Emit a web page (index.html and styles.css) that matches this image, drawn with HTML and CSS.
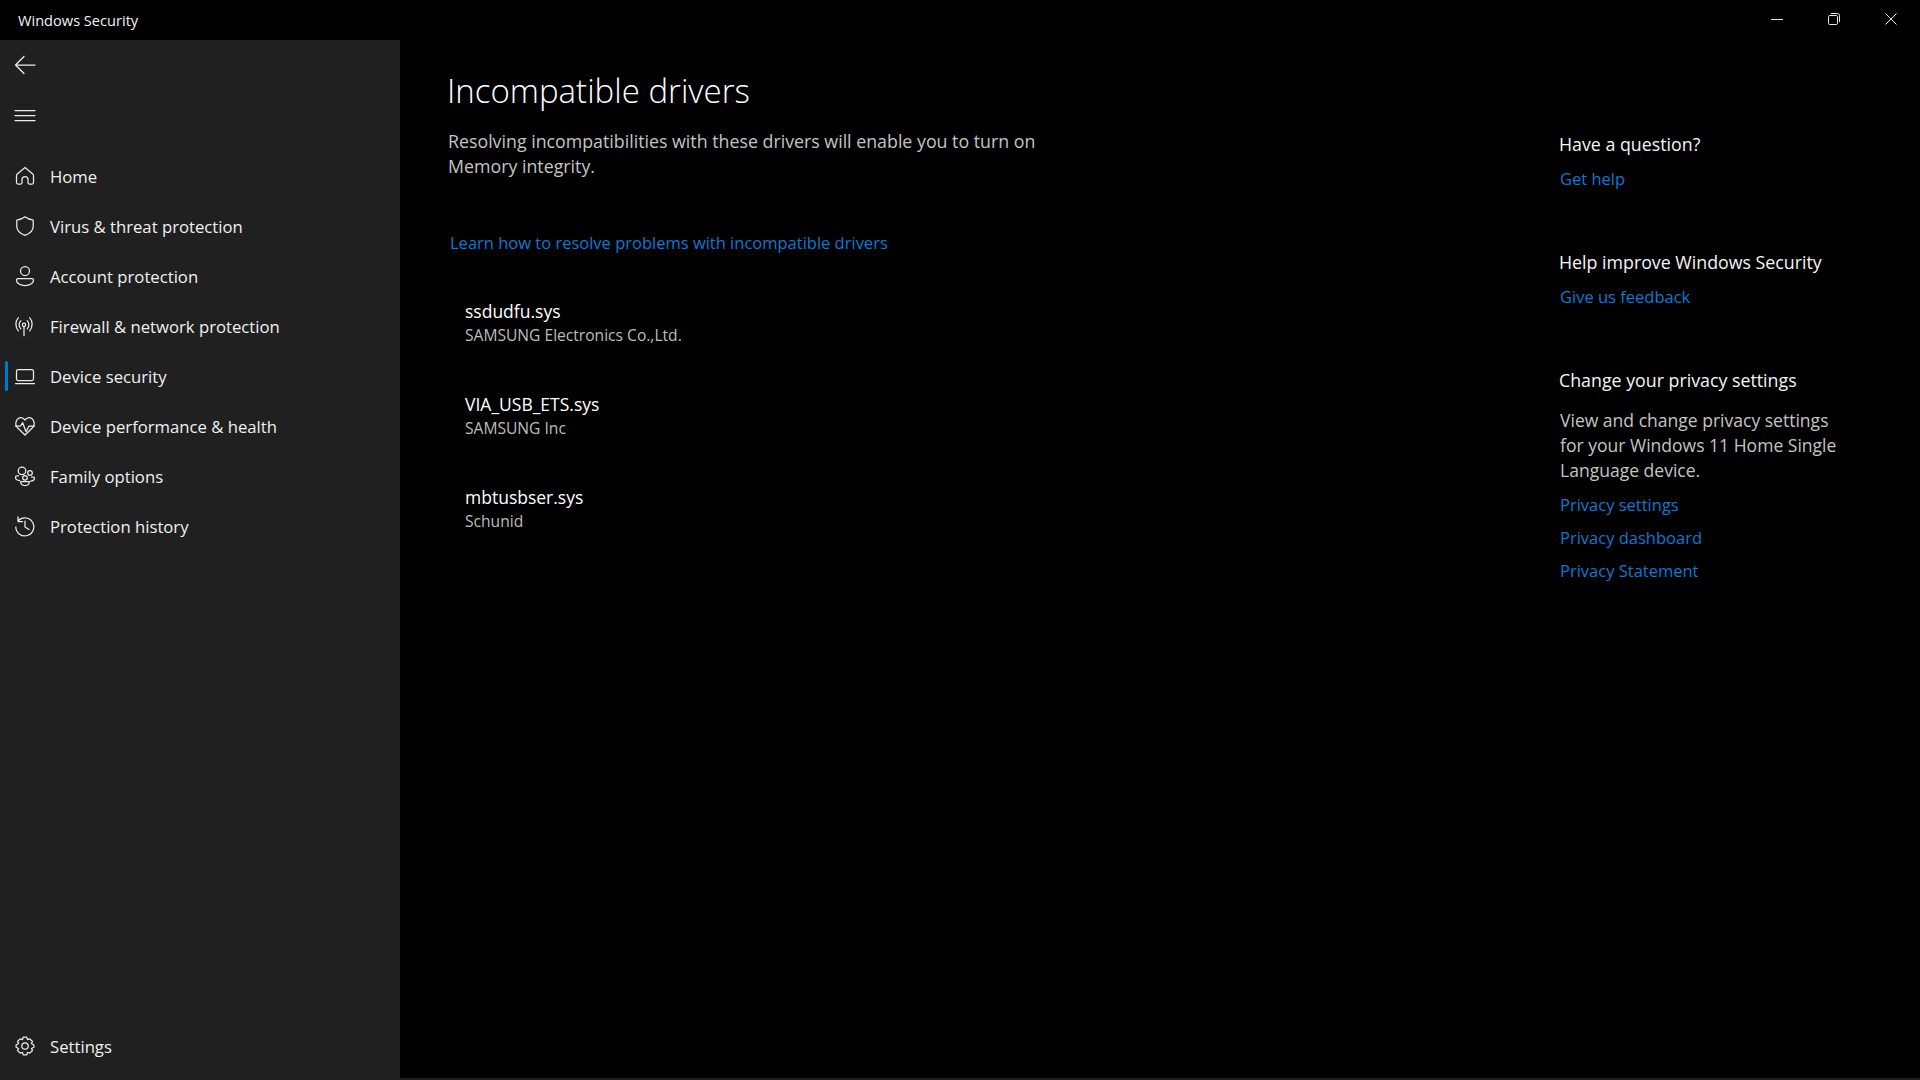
FILE: index.html
```html
<!DOCTYPE html>
<html lang="en">
<head>
<meta charset="utf-8">
<title>Windows Security</title>
<link rel="stylesheet" href="styles.css">
</head>
<body>
<div class="app">
  <header class="titlebar">
    <span class="app-name">Windows Security</span>
    <div class="controls">
      <span class="ctl"><svg width="14" height="14" viewBox="0 0 14 14"><path d="M1 7.5H13"/></svg></span>
      <span class="ctl"><svg width="14" height="14" viewBox="0 0 14 14"><rect x="1.5" y="3.5" width="9" height="9" rx="1.2"/><path d="M4 1.5H10.5A2 2 0 0 1 12.5 3.5V10"/></svg></span>
      <span class="ctl"><svg width="14" height="14" viewBox="0 0 14 14"><path d="M1.5 1.5L12.5 12.5M12.5 1.5L1.5 12.5"/></svg></span>
    </div>
  </header>
  <div class="main">
    <aside class="sidebar">
      <div class="tool"><svg class="icon" viewBox="0 0 20 20"><path d="M.5 10H20M9 1.5L.5 10L9 18.5"/></svg></div>
      <div class="tool"><svg class="icon" viewBox="0 0 20 20"><path d="M0 5.5H20M0 10.5H20M0 15.5H20"/></svg></div>
      <nav class="nav">
        <a class="nav-item"><svg class="icon" viewBox="0 0 20 20"><path d="M10 1.5L2 8.3A2 2 0 0 0 1.5 9.5V16.5A1.5 1.5 0 0 0 3 18H6A1.2 1.2 0 0 0 7 17V13.5A3 3 0 0 1 13 13.5V17A1.2 1.2 0 0 0 14 18H17A1.5 1.5 0 0 0 18.5 16.5V9.5A2 2 0 0 0 18 8.3Z"/></svg><span>Home</span></a>
        <a class="nav-item"><svg class="icon" viewBox="0 0 20 20"><path d="M10 .8C7.5 2.8 5 3.8 1.8 4V10.5C1.8 14.5 4.5 17.3 10 19.3C15.5 17.3 18.2 14.5 18.2 10.5V4C15 3.8 12.5 2.8 10 .8Z"/></svg><span>Virus &amp; threat protection</span></a>
        <a class="nav-item"><svg class="icon" viewBox="0 0 20 20"><circle cx="10" cy="5" r="4.5"/><path d="M3 12.5H17A1.5 1.5 0 0 1 18.5 14C18.5 17.5 14.5 19.5 10 19.5C5.5 19.5 1.5 17.5 1.5 14A1.5 1.5 0 0 1 3 12.5Z"/></svg><span>Account protection</span></a>
        <a class="nav-item"><svg class="icon" viewBox="0 0 20 20"><circle cx="9" cy="8.8" r="1.7"/><path d="M9 10.5V19.5M5.8 4.8A5.5 5.5 0 0 0 5.8 12.8M12.2 4.8A5.5 5.5 0 0 1 12.2 12.8M3.4 1.6A10 10 0 0 0 3.4 14.8M14.6 1.6A10 10 0 0 1 14.6 14.8"/></svg><span>Firewall &amp; network protection</span></a>
        <a class="nav-item active"><svg class="icon" viewBox="0 0 20 20"><rect x="1.5" y="3.5" width="17" height="11" rx="1.8"/><path d="M.5 17.5H19.5"/></svg><span>Device security</span></a>
        <a class="nav-item"><svg class="icon" viewBox="0 0 20 20"><path d="M10 19L2.8 12C-1.5 7.5 2 1.7 6 1.7C7.800 1.7 9 2.7 10 4C11 2.7 12.2 1.7 14 1.7C18 1.7 21.5 7.5 17.2 12Z"/><path d="M.5 10H5.5L7.7 6.700L11 15.700L14 10H19.5"/></svg><span>Device performance &amp; health</span></a>
        <a class="nav-item"><svg class="icon" viewBox="0 0 20 20"><circle cx="7" cy="4.800" r="3.800"/><circle cx="15" cy="7" r="2.300"/><circle cx="10" cy="11.800" r="2.300"/><path d="M3.500 9.800H2A1.500 1.500 0 0 0 .5 11.300C.5 13.300 2.300 14.500 4.800 14.500M16.500 11H18.500A1 1 0 0 1 19.500 12C19.500 13.800 17.800 15 15.500 15"/><path d="M5.700 15.500H14.300V16C14.300 18 12.500 19.500 10 19.500C7.500 19.500 5.700 18 5.700 16Z"/></svg><span>Family options</span></a>
        <a class="nav-item"><svg class="icon" viewBox="0 0 20 20"><path d="M3 5A9 9 0 1 1 .8 11M3 .8V5.500H7.500M10 5V11L14 13.500"/></svg><span>Protection history</span></a>
      </nav>
      <a class="nav-item settings"><svg class="icon" viewBox="0 0 20 20"><circle cx="10" cy="10" r="3.200"/><path d="M8.200 1.200H11.800L12.500 3.600L14.800 2.900L17.500 5.500L16.400 7.500L18.900 9V11.200L16.500 12.500L17.500 14.500L14.800 17.100L12.500 16.400L11.800 18.800H8.200L7.500 16.400L5.200 17.100L2.500 14.500L3.500 12.500L1.100 11.200V9L3.600 7.500L2.500 5.500L5.200 2.900L7.500 3.600Z"/></svg><span>Settings</span></a>
    </aside>
    <main class="content">
      <section class="primary">
        <h1 class="page-title">Incompatible drivers</h1>
        <p class="lead">Resolving incompatibilities with these drivers will enable you to turn on<br>Memory integrity.</p>
        <a class="link learn">Learn how to resolve problems with incompatible drivers</a>
        <ul class="drivers">
          <li class="driver"><div class="driver-name">ssdudfu.sys</div><div class="driver-vendor">SAMSUNG Electronics Co.,Ltd.</div></li>
          <li class="driver"><div class="driver-name">VIA_USB_ETS.sys</div><div class="driver-vendor">SAMSUNG Inc</div></li>
          <li class="driver"><div class="driver-name">mbtusbser.sys</div><div class="driver-vendor">Schunid</div></li>
        </ul>
      </section>
      <section class="aside-col">
        <div class="block">
          <h2 class="block-title">Have a question?</h2>
          <a class="link">Get help</a>
        </div>
        <div class="block">
          <h2 class="block-title">Help improve Windows Security</h2>
          <a class="link">Give us feedback</a>
        </div>
        <div class="block">
          <h2 class="block-title">Change your privacy settings</h2>
          <p class="block-text">View and change privacy settings<br>for your Windows 11 Home Single<br>Language device.</p>
          <a class="link">Privacy settings</a>
          <a class="link">Privacy dashboard</a>
          <a class="link">Privacy Statement</a>
        </div>
      </section>
    </main>
  </div>
  <div class="bottom-edge"></div>
</div>
</body>
</html>
```
FILE: styles.css
```css
* { box-sizing: border-box; }
html, body { margin: 0; height: 100%; background: #000; }
body {
  font-family: "Open Sans", "Noto Sans", "Liberation Sans", sans-serif;
  font-size: 16.7px;
  color: #f2f2f2;
  overflow: hidden;
}
.app { display: flex; flex-direction: column; height: 1080px; }
.titlebar {
  height: 40px;
  flex: none;
  display: flex;
  align-items: center;
  justify-content: space-between;
  background: #000;
}
.app-name { padding-left: 18px; font-size: 14.6px; color: #f2f2f2; }
.controls { display: flex; height: 40px; padding-right: 1px; margin-top: -2px; }
.ctl { width: 57px; display: flex; align-items: center; justify-content: center; }
.ctl svg { fill: none; stroke: #e6e6e6; stroke-width: 1; }
.main { flex: 1; display: flex; min-height: 0; }
.sidebar {
  width: 400px;
  flex: none;
  background: #202020;
  display: flex;
  flex-direction: column;
  padding-bottom: 7px;
}
.icon {
  width: 20px;
  height: 20px;
  flex: none;
  overflow: visible;
  fill: none;
  stroke: #ececec;
  stroke-width: 1.25;
  stroke-linejoin: round;
  stroke-linecap: round;
}
.tool { height: 50px; display: flex; align-items: center; padding-left: 15px; }
.nav { margin-top: 11px; display: flex; flex-direction: column; flex: 1; }
.nav-item {
  position: relative;
  height: 50px;
  flex: none;
  display: flex;
  align-items: center;
  gap: 15px;
  padding-left: 15px;
  color: #f0f0f0;
}
.nav-item.active::before {
  content: "";
  position: absolute;
  left: 5px;
  top: 10px;
  width: 3px;
  height: 30px;
  border-radius: 2px;
  background: #0078d4;
}
.content { flex: 1; display: flex; justify-content: space-between; min-width: 0; }
.primary { padding: 28px 0 0 47px; display: flex; flex-direction: column; align-items: flex-start; }
.page-title { margin: 0; font-size: 33px; font-weight: 300; line-height: 46px; color: #fff; }
.lead { margin: 15px 0 0 1px; font-size: 17.8px; line-height: 25px; color: #c4c4c4; }
.link { display: block; color: #0a7ad6; font-size: 16.5px; line-height: 25px; }
.learn { margin: 51px 0 0 3px; }
.drivers { list-style: none; margin: 44px 0 0; padding: 0; }
.driver { padding-left: 18px; height: 93px; }
.driver-name { font-size: 17.5px; line-height: 25px; color: #fff; }
.driver-vendor { font-size: 15.6px; line-height: 23px; color: #bdbdbd; }
.aside-col { width: 361px; flex: none; padding-top: 92px; }
.block { margin-bottom: 59px; }
.block-title { margin: 0 0 9px; font-size: 17.8px; font-weight: 400; line-height: 25px; color: #f5f5f5; }
.block .link { margin-left: 1px; }
.block .link + .link { margin-top: 8px; }
.block-text { margin: 15px 0 9px 1px; font-size: 17.55px; line-height: 25px; color: #c4c4c4; }
.bottom-edge { height: 2px; flex: none; background: #202020; }
```
